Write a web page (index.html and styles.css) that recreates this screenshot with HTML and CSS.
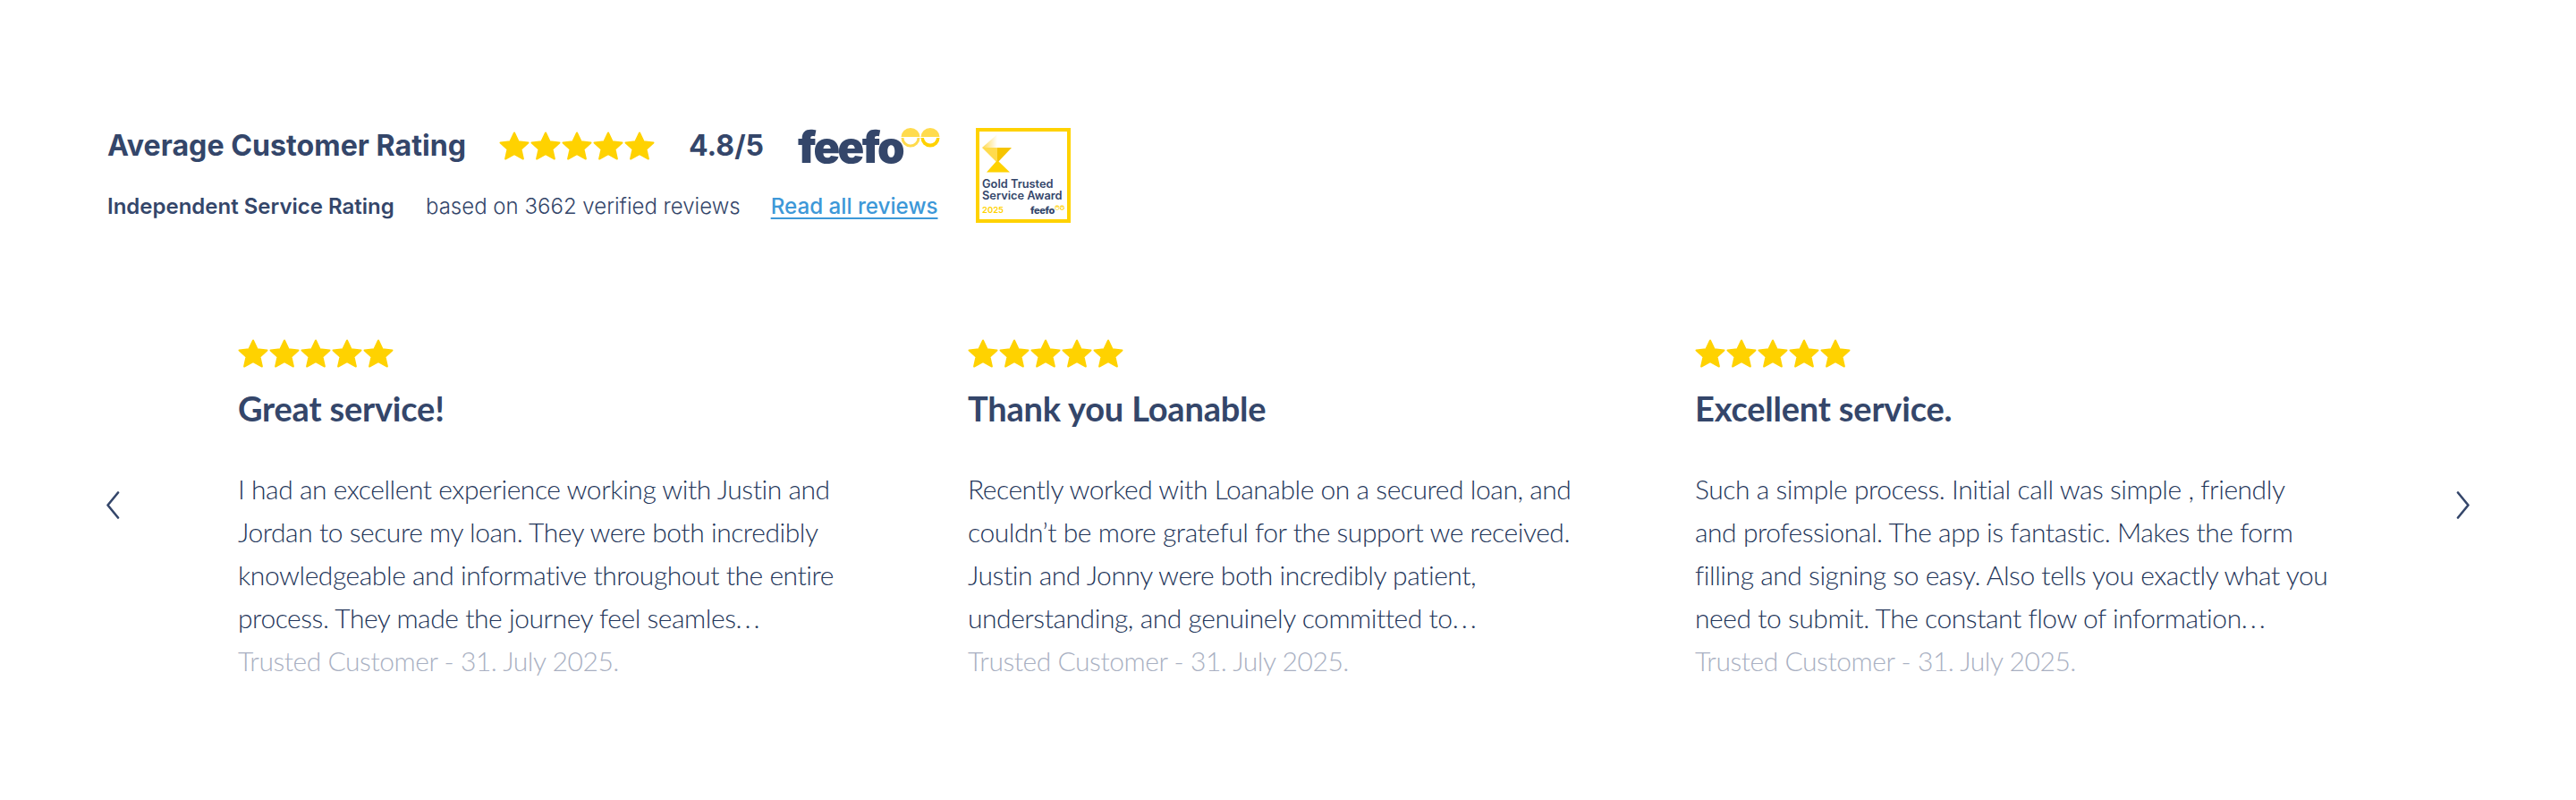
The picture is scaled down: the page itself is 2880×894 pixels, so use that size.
FILE: index.html

```html
<!DOCTYPE html>
<html lang="en">
<head>
  <meta charset="UTF-8">
  <title>Customer Reviews</title>
  <link rel="stylesheet" href="styles.css">
</head>
<body>

<svg class="defs" width="0" height="0">
  <symbol id="star" viewBox="0 0 34 32">
    <path d="M17 1.5 L21.6 11.2 L32.5 12.4 L24.5 19.7 L26.9 30.5 L17 25.1 L7.1 30.5 L9.5 19.7 L1.5 12.4 L12.4 11.2 Z" fill="#ffd200" stroke="#ffd200" stroke-width="2" stroke-linejoin="round"/>
  </symbol>
  <symbol id="eyes" viewBox="0 0 44 22">
    <path d="M0.5 10 A10.5 10 0 0 1 21.5 10 Z" fill="#ffdb4d"/>
    <path d="M0.5 11 H3.5 A7.5 7.5 0 0 0 18.5 11 H21.5 A10.5 10.5 0 0 1 0.5 11 Z" fill="#ffdb4d"/>
    <path d="M22.5 10 A10.5 10 0 0 1 43.5 10 Z" fill="#ffdb4d"/>
    <path d="M22.5 11 H43.5 A10.5 10.5 0 0 1 22.5 11 Z" fill="#ffd200"/>
    <path d="M26 11 H40 A7 6.5 0 0 1 26 11 Z" fill="#fff"/>
  </symbol>
</svg>

<section class="summary">
  <div class="summary-text">
    <div class="summary-top">
      <h2>Average Customer Rating</h2>
      <div class="stars">
        <svg><use href="#star"/></svg><svg><use href="#star"/></svg><svg><use href="#star"/></svg><svg><use href="#star"/></svg><svg><use href="#star"/></svg>
      </div>
      <span class="score">4.8/5</span>
      <div class="feefo">
        <span class="feefo-word">feefo</span>
        <svg class="feefo-eyes"><use href="#eyes"/></svg>
      </div>
    </div>
    <div class="summary-bottom">
      <strong>Independent Service Rating</strong>
      <span>based on 3662 verified reviews</span>
      <a href="#reviews">Read all reviews</a>
    </div>
  </div>
  <div class="badge">
    <svg class="badge-icon" width="34" height="43" viewBox="0 0 34 43">
      <defs>
        <linearGradient id="fade" x1="0" x2="1" y1="0" y2="0">
          <stop offset="0" stop-color="#ffd84a"/>
          <stop offset="1" stop-color="#fff"/>
        </linearGradient>
      </defs>
      <polygon points="17,0 0,15 17,15" fill="url(#fade)"/>
      <polygon points="0,15 17,15 17,32" fill="#ffdb4d"/>
      <polygon points="17,15 33,15 17,32" fill="#f5c400"/>
      <polygon points="17,29 31,42.5 5,42.5" fill="#ffd200"/>
    </svg>
    <div class="badge-title">Gold Trusted<br>Service Award</div>
    <div class="badge-foot">
      <span class="badge-year">2025</span>
      <span class="badge-brand">
        <span class="badge-feefo">feefo</span>
        <svg class="badge-eyes"><use href="#eyes"/></svg>
      </span>
    </div>
  </div>
</section>

<section class="carousel" id="reviews">
  <button class="arrow" aria-label="Previous">
    <svg width="16" height="31" viewBox="0 0 16 31"><polyline points="14,1.5 2.5,15.5 14,29.5" fill="none" stroke="#34466a" stroke-width="2.6" stroke-linecap="round" stroke-linejoin="round"/></svg>
  </button>

  <div class="cards">
    <article class="card">
      <div class="stars">
        <svg><use href="#star"/></svg><svg><use href="#star"/></svg><svg><use href="#star"/></svg><svg><use href="#star"/></svg><svg><use href="#star"/></svg>
      </div>
      <h3>Great service!</h3>
      <p>I had an excellent experience working with Justin and<br>Jordan to secure my loan. They were both incredibly<br>knowledgeable and informative throughout the entire<br>process. They made the journey feel seamles<span class="dots">...</span></p>
      <div class="meta">Trusted Customer - 31. July 2025.</div>
    </article>

    <article class="card">
      <div class="stars">
        <svg><use href="#star"/></svg><svg><use href="#star"/></svg><svg><use href="#star"/></svg><svg><use href="#star"/></svg><svg><use href="#star"/></svg>
      </div>
      <h3>Thank you Loanable</h3>
      <p>Recently worked with Loanable on a secured loan, and<br>couldn’t be more grateful for the support we received.<br>Justin and Jonny were both incredibly patient,<br>understanding, and genuinely committed to<span class="dots">...</span></p>
      <div class="meta">Trusted Customer - 31. July 2025.</div>
    </article>

    <article class="card">
      <div class="stars">
        <svg><use href="#star"/></svg><svg><use href="#star"/></svg><svg><use href="#star"/></svg><svg><use href="#star"/></svg><svg><use href="#star"/></svg>
      </div>
      <h3>Excellent service.</h3>
      <p>Such a simple process. Initial call was simple , friendly<br>and professional. The app is fantastic. Makes the form<br>filling and signing so easy. Also tells you exactly what you<br>need to submit. The constant flow of information<span class="dots">...</span></p>
      <div class="meta">Trusted Customer - 31. July 2025.</div>
    </article>
  </div>

  <button class="arrow" aria-label="Next">
    <svg width="16" height="31" viewBox="0 0 16 31"><polyline points="2,1.5 13.5,15.5 2,29.5" fill="none" stroke="#34466a" stroke-width="2.6" stroke-linecap="round" stroke-linejoin="round"/></svg>
  </button>
</section>

</body>
</html>
```

FILE: styles.css

```css
body {
  margin: 0;
  background-color: #fff;
  color: #34466a;
  font-family: 'Inter', sans-serif;
}
.defs {
  position: absolute;
}
.summary {
  display: flex;
  align-items: center;
  gap: 40px;
  padding: 142px 0 0 120px;
}
.summary-top {
  display: flex;
  align-items: center;
  height: 40px;
  margin-top: -4px;
}
.summary-top h2 {
  margin: 0;
  font-size: 32.2px;
  font-weight: 700;
  width: 438px;
}
.stars {
  display: flex;
  gap: 1px;
}
.stars svg {
  width: 34px;
  height: 32px;
}
.score {
  margin-left: 38px;
  font-size: 32px;
  font-weight: 700;
}
.feefo {
  display: flex;
  align-items: flex-start;
  margin: 4px 0 0 38px;
}
.feefo-word {
  font-size: 49px;
  font-weight: 900;
  letter-spacing: -2.6px;
  line-height: 40px;
}
.feefo-eyes {
  width: 44px;
  height: 22px;
  margin: -2px 0 0 -2px;
}
.summary-bottom {
  display: flex;
  align-items: center;
  margin-top: 33px;
  font-size: 24px;
  font-weight: 300;
}
.summary-bottom strong {
  font-weight: 600;
  width: 356px;
}
.summary-bottom a {
  margin-left: 34px;
  color: #3d98d8;
  font-size: 24.2px;
  font-weight: 500;
  text-decoration: underline;
  text-underline-offset: 4px;
}
.badge {
  box-sizing: border-box;
  width: 106px;
  height: 106px;
  margin-top: 1px;
  border: 4px solid #ffd200;
  padding: 3px 3px;
}
.badge-icon {
  display: block;
}
.badge-title {
  font-size: 12.8px;
  font-weight: 600;
  line-height: 13px;
  margin-top: 6px;
  white-space: nowrap;
}
.badge-foot {
  display: flex;
  justify-content: space-between;
  margin-top: 4px;
  font-size: 9.5px;
  font-weight: 600;
}
.badge-year {
  color: #ffd200;
}
.badge-brand {
  display: flex;
  align-items: flex-start;
}
.badge-feefo {
  font-size: 11px;
  font-weight: 800;
  line-height: 12px;
  letter-spacing: -0.3px;
}
.badge-eyes {
  width: 11px;
  height: 6px;
}
.carousel {
  display: flex;
  align-items: center;
  padding: 130px 118px 0 118px;
}
.arrow {
  background: none;
  border: none;
  padding: 0;
  width: 16px;
  height: 31px;
  margin-bottom: 12px;
  flex: none;
}
.cards {
  flex: 1;
  display: grid;
  grid-template-columns: 816px 813px 1fr;
  padding-left: 132px;
}
.card h3 {
  margin: 20px 0 0;
  font-family: 'Lato', sans-serif;
  font-size: 38px;
  font-weight: 700;
  letter-spacing: -0.2px;
  line-height: 50px;
}
.card p {
  margin: 41px 0 0;
  color: #24365a;
  font-family: 'Lato', sans-serif;
  font-size: 30px;
  font-weight: 300;
  letter-spacing: -0.45px;
  line-height: 48px;
  white-space: nowrap;
}
.dots {
  letter-spacing: 3px;
}
.meta {
  font-family: 'Lato', sans-serif;
  font-size: 30px;
  font-weight: 300;
  letter-spacing: -0.45px;
  line-height: 48px;
  color: #a9b0c2;
}
```
